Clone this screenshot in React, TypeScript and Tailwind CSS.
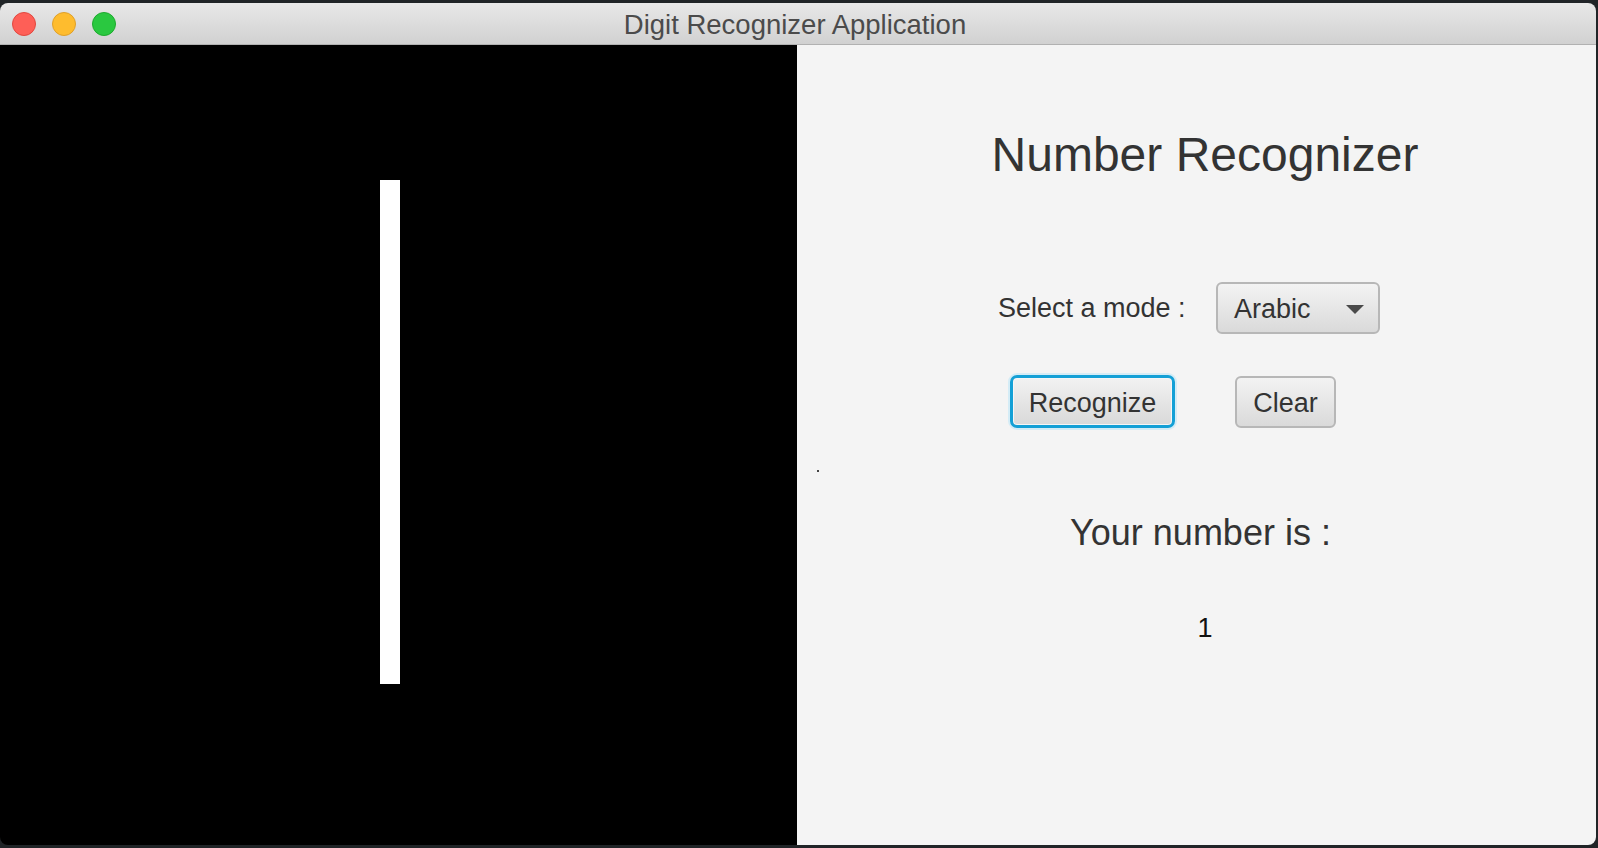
import React from 'react';

const font = { fontFamily: '"Liberation Sans", Arial, sans-serif' };

const TrafficLights: React.FC = () => (
  <div className="flex items-center gap-[16px] pl-[12px]">
    <span className="w-[24px] h-[24px] rounded-full bg-[#fe5f57] border border-[#e1483f]" />
    <span className="w-[24px] h-[24px] rounded-full bg-[#febc2e] border border-[#dfa02a]" />
    <span className="w-[24px] h-[24px] rounded-full bg-[#2ac840] border border-[#1eaa2e]" />
  </div>
);

const App: React.FC = () => {
  const digit = '1';

  return (
    <div className="w-[1598px] h-[848px] bg-[#202427] pt-[3px] overflow-hidden" style={font}>
      <div className="w-[1596px] h-[842px] rounded-[8px] overflow-hidden flex flex-col">
        {/* Title bar */}
        <div className="relative h-[42px] shrink-0 flex items-center bg-gradient-to-b from-[#e8e8e8] to-[#d1d1d1] border-b border-[#b1b1b1]">
          <TrafficLights />
          <div className="absolute inset-0 flex items-center justify-center pointer-events-none">
            <span className="text-[27.5px] leading-none text-[#4b4b4b] mr-[6px] mt-[2px]">Digit Recognizer Application</span>
          </div>
        </div>

        <div className="flex flex-1">
          {/* Drawing canvas */}
          <div className="relative w-[797px] bg-black">
            <div className="absolute left-[380px] top-[135px] w-[20px] h-[504px] bg-white" />
          </div>

          {/* Controls */}
          <div className="relative flex-1 bg-[#f4f4f4] flex flex-col items-center pl-[17px] text-[#333333]">
            <span className="absolute left-[20px] top-[425px] w-[2px] h-[2px] bg-[#444]" />

            <h1 className="mt-[86px] text-[48px] leading-none font-normal">Number Recognizer</h1>

            <div className="self-start ml-[184px] mt-[103px] flex items-center">
              <span className="w-[218px] text-[27px] leading-none">Select a mode :</span>
              <button className="w-[164px] h-[52px] rounded-[6px] border-2 border-[#b7b7b7] bg-gradient-to-b from-[#f3f3f3] to-[#dadada] flex items-center justify-between pl-[16px] pr-[14px] pt-[2px] text-[27px] leading-none text-[#333]">
                <span>Arabic</span>
                <svg width="18" height="9" viewBox="0 0 18 9">
                  <path d="M0 0 L18 0 L9 9 Z" fill="#4a4a4a" />
                </svg>
              </button>
            </div>

            <div className="self-start ml-[196px] mt-[41px] flex items-center gap-[60px]">
              <button className="w-[165px] h-[53px] rounded-[7px] border-[3px] border-[#14a0d6] shadow-[0_0_0_2px_#d4ecf6,inset_0_0_0_1px_#f6f6f6] bg-gradient-to-b from-[#f2f2f2] to-[#d9d9d9] pt-[3px] text-[27px] leading-none text-[#333]">
                Recognize
              </button>
              <button className="w-[101px] h-[52px] rounded-[6px] border-2 border-[#b7b7b7] bg-gradient-to-b from-[#f3f3f3] to-[#dadada] pt-[3px] text-[27px] leading-none text-[#333]">
                Clear
              </button>
            </div>

            <p className="mt-[87px] mr-[9px] text-[36px] leading-none">Your number is :</p>
            <p className="mt-[64px] text-[27px] leading-none text-[#111]">{digit}</p>
          </div>
        </div>
      </div>
    </div>
  );
};

export default App;
